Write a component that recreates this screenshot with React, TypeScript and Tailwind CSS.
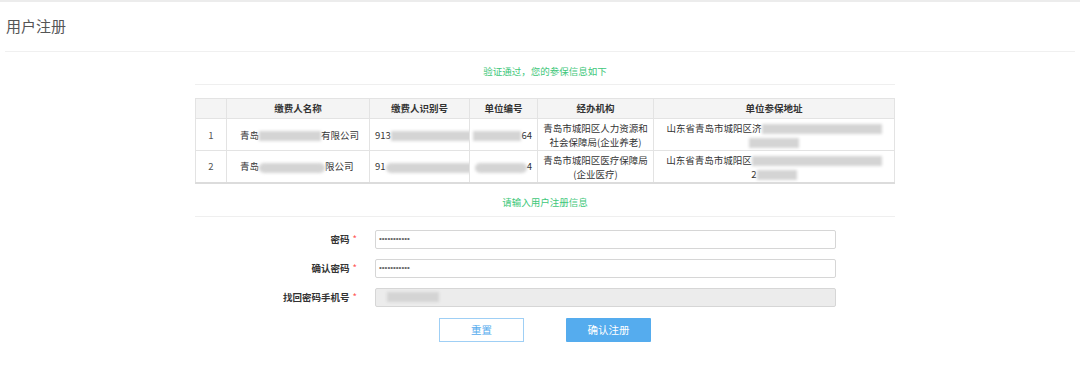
import React from "react";

const font = { fontFamily: '"Noto Sans CJK SC", "Liberation Sans", sans-serif' };

// redacted bits in the screenshot are blurred gray blocks
const Blur = ({ w, className = "" }: { w: number; className?: string }) => (
  <span
    className={"inline-block h-[10px] align-middle bg-[#d4d4d4] blur-[1.5px] " + className}
    style={{ width: w }}
  />
);

const rows = [
  {
    no: 1,
    name: (
      <>
        青岛<Blur w={62} />有限公司
      </>
    ),
    id: (
      <>
        913<Blur w={100} />
      </>
    ),
    code: (
      <>
        <Blur w={48} />64
      </>
    ),
    org: "青岛市城阳区人力资源和社会保障局(企业养老)",
    addr: (
      <>
        山东省青岛市城阳区济<Blur w={120} />
        <br />
        <Blur w={50} />
      </>
    ),
  },
  {
    no: 2,
    name: (
      <>
        青岛<Blur w={66} className="rounded-full" />限公司
      </>
    ),
    id: (
      <>
        91<Blur w={104} className="rounded-full" />
      </>
    ),
    code: (
      <>
        <Blur w={52} className="rounded-full" />4
      </>
    ),
    org: "青岛市城阳区医疗保障局(企业医疗)",
    addr: (
      <>
        山东省青岛市城阳区<Blur w={130} />
        <br />
        2<Blur w={40} />
      </>
    ),
  },
];

const fields = [
  { label: "密码", value: "•••••••••••", disabled: false },
  { label: "确认密码", value: "•••••••••••", disabled: false },
  { label: "找回密码手机号", value: "", disabled: true },
];

const cell = "border border-[#e3e3e3]";

export default function App() {
  return (
    <div className="w-[1080px] h-[367px] bg-white text-[#333] overflow-hidden" style={font}>
      <div className="h-[2px] bg-[#ececec]" />
      <div className="mx-[5px] h-[50px] flex items-center border-b border-[#f0f0f0]">
        <h1 className="text-[15px] text-[#555] pl-[1px]">用户注册</h1>
      </div>

      <div className="w-[700px] ml-[195px]">
        <div className="h-[33px] flex items-end justify-center border-b border-[#efefef] pb-[6px]">
          <span className="text-[9.5px] text-[#3ec77a]">验证通过，您的参保信息如下</span>
        </div>

        <table className="mt-[13px] w-full table-fixed border-collapse text-[9.5px] border-b-2 border-b-[#dcdcdc]">
          <colgroup>
            <col className="w-[31px]" />
            <col className="w-[143px]" />
            <col className="w-[100px]" />
            <col className="w-[68px]" />
            <col className="w-[116px]" />
            <col />
          </colgroup>
          <thead>
            <tr className="bg-[#f4f4f4] h-[20px]">
              <th className={cell} />
              <th className={cell + " font-bold"}>缴费人名称</th>
              <th className={cell + " font-bold"}>缴费人识别号</th>
              <th className={cell + " font-bold"}>单位编号</th>
              <th className={cell + " font-bold"}>经办机构</th>
              <th className={cell + " font-bold"}>单位参保地址</th>
            </tr>
          </thead>
          <tbody>
            {rows.map((r) => (
              <tr key={r.no} className="h-[32px] leading-[14px]">
                <td className={cell + " text-center text-[#555]"}>{r.no}</td>
                <td className={cell + " pl-[13px] whitespace-nowrap overflow-hidden"}>{r.name}</td>
                <td className={cell + " pl-[5px] whitespace-nowrap overflow-hidden"}>{r.id}</td>
                <td className={cell + " text-right pr-[5px] whitespace-nowrap overflow-hidden"}>{r.code}</td>
                <td className={cell + " text-center px-[4px] align-top pt-[2px]"}>{r.org}</td>
                <td className={cell + " text-center px-[8px] align-top pt-[2px]"}>{r.addr}</td>
              </tr>
            ))}
          </tbody>
        </table>

        <div className="h-[33px] flex items-end justify-center border-b border-[#efefef] pb-[6px]">
          <span className="text-[9.5px] text-[#3ec77a]">请输入用户注册信息</span>
        </div>

        <div className="mt-[13px] flex flex-col gap-[10px]">
          {fields.map((f) => (
            <div key={f.label} className="flex items-center h-[19px]">
              <label className="w-[180px] text-right text-[9.5px] font-bold text-[#333] pr-[18px]">
                {f.label}
                <span className="text-[#f55] ml-[3px] font-normal">*</span>
              </label>
              <div
                className={
                  "w-[461px] h-[19px] rounded-[2px] border border-[#d6d6d6] flex items-center pl-[3px] text-[8px] text-[#666] " +
                  (f.disabled ? "bg-[#ececec]" : "bg-white")
                }
                style={{ fontFamily: '"Liberation Sans", sans-serif' }}
              >
                {f.disabled ? <Blur w={52} className="ml-[8px] bg-[#c8c8c8]" /> : f.value}
              </div>
            </div>
          ))}
        </div>

        <div className="mt-[11px] ml-[244px] flex gap-[42px]">
          <button className="w-[85px] h-[24px] border border-[#9fcff5] text-[#55acee] text-[10.5px] bg-white">
            重置
          </button>
          <button className="w-[85px] h-[24px] bg-[#55acee] text-white text-[10.5px] rounded-[1px]">
            确认注册
          </button>
        </div>
      </div>
    </div>
  );
}
